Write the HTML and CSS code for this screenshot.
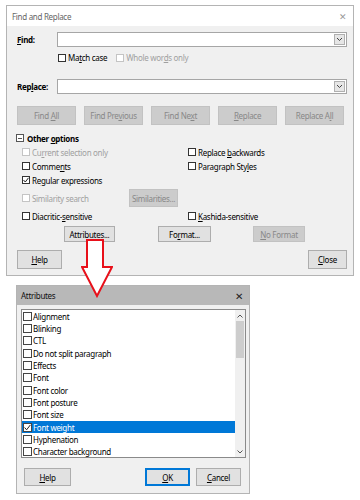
FILE: index.html
```html
<!DOCTYPE html>
<html lang="en">
<head>
<meta charset="UTF-8">
<meta name="viewport" content="width=device-width, initial-scale=1.0">
<title>Find and Replace</title>
<link rel="stylesheet" href="styles.css">
</head>
<body>

<div class="dialog find-dialog">
    <div class="titlebar">
        <span>Find and Replace</span>
        <span class="close-x">&#x2715;</span>
    </div>
    <div class="content">
        <div class="field-row">
            <span class="field-label"><u>F</u>ind:</span>
            <div class="combo"><span class="drop"><svg width="7" height="5" viewBox="0 0 7 5"><polyline points="1,1 3.5,3.5 6,1" fill="none" stroke="#444" stroke-width="1"/></svg></span></div>
        </div>
        <div class="match-row">
            <span class="opt"><span class="box"></span><span>Ma<u>t</u>ch case</span></span>
            <span class="opt off"><span class="box"></span><span>Whole wor<u>d</u>s only</span></span>
        </div>
        <div class="field-row replace-row">
            <span class="field-label">Rep<u>l</u>ace:</span>
            <div class="combo"><span class="drop"><svg width="7" height="5" viewBox="0 0 7 5"><polyline points="1,1 3.5,3.5 6,1" fill="none" stroke="#444" stroke-width="1"/></svg></span></div>
        </div>
        <div class="action-row">
            <span class="btn off"><span>Find <u>A</u>ll</span></span>
            <span class="btn off"><span>Find Pre<u>v</u>ious</span></span>
            <span class="btn off"><span>Find Ne<u>x</u>t</span></span>
            <span class="btn off"><span><u>R</u>eplace</span></span>
            <span class="btn off"><span>Replace A<u>l</u>l</span></span>
        </div>
        <div class="other-row">
            <span class="minus-box"></span><span>Other <u>o</u>ptions</span>
        </div>
        <div class="options">
            <span class="opt off"><span class="box"></span><span>Cu<u>r</u>rent selection only</span></span>
            <span class="opt"><span class="box"></span><span>Replace <u>b</u>ackwards</span></span>
            <span class="opt"><span class="box"></span><span>Comme<u>n</u>ts</span></span>
            <span class="opt"><span class="box"></span><span>Paragraph Sty<u>l</u>es</span></span>
            <span class="opt"><span class="box"><svg width="6" height="6" viewBox="0 0 6 6"><polyline points="0.5,3 2.3,5 5.5,0.8" fill="none" stroke="#222" stroke-width="1"/></svg></span><span>Re<u>g</u>ular expressions</span></span>
            <span></span>
            <span class="sim-cell">
                <span class="opt off"><span class="box"></span><span>Similarity search</span></span>
                <span class="btn off sim-btn"><span>Similarities...</span></span>
            </span>
            <span></span>
            <span class="opt"><span class="box"></span><span>Diacritic-<u>s</u>ensitive</span></span>
            <span class="opt"><span class="box"></span><span><u>K</u>ashida-sensitive</span></span>
        </div>
        <div class="attr-row">
            <span class="btn attr-btn"><span>Attribu<u>t</u>es...</span></span>
            <span class="btn format-btn"><span>Fo<u>r</u>mat...</span></span>
            <span class="btn off noformat-btn"><span><u>N</u>o Format</span></span>
        </div>
        <div class="footer-row">
            <span class="btn help-btn"><span><u>H</u>elp</span></span>
            <span class="btn close-btn"><span><u>C</u>lose</span></span>
        </div>
    </div>
</div>

<div class="dialog attr-dialog">
    <div class="titlebar grey">
        <span>Attributes</span>
        <span class="close-x dark">&#x2715;</span>
    </div>
    <div class="attr-content">
        <div class="listbox">
            <div class="items">
                <div class="item"><span class="box"></span>Alignment</div>
                <div class="item"><span class="box"></span>Blinking</div>
                <div class="item"><span class="box"></span>CTL</div>
                <div class="item"><span class="box"></span>Do not split paragraph</div>
                <div class="item"><span class="box"></span>Effects</div>
                <div class="item"><span class="box"></span>Font</div>
                <div class="item"><span class="box"></span>Font color</div>
                <div class="item"><span class="box"></span>Font posture</div>
                <div class="item"><span class="box"></span>Font size</div>
                <div class="item selected"><span class="box"><svg width="7" height="7" viewBox="0 0 7 7"><polyline points="0.6,3.5 2.6,5.8 6.4,0.9" fill="none" stroke="#222" stroke-width="1"/></svg></span>Font weight</div>
                <div class="item"><span class="box"></span>Hyphenation</div>
                <div class="item"><span class="box"></span>Character background</div>
            </div>
            <div class="scrollbar">
                <span class="sb-arrow"><svg width="6" height="4" viewBox="0 0 6 4"><polyline points="0.5,3.5 3,1 5.5,3.5" fill="none" stroke="#555" stroke-width="1"/></svg></span>
                <span class="thumb"></span>
                <span class="sb-track"></span>
                <span class="sb-arrow"><svg width="6" height="4" viewBox="0 0 6 4"><polyline points="0.5,0.5 3,3 5.5,0.5" fill="none" stroke="#555" stroke-width="1"/></svg></span>
            </div>
        </div>
        <div class="attr-footer">
            <span class="btn help2-btn"><span><u>H</u>elp</span></span>
            <span class="btn ok-btn"><span><u>O</u>K</span></span>
            <span class="btn cancel-btn"><span><u>C</u>ancel</span></span>
        </div>
    </div>
</div>

<svg class="arrow" width="32" height="59" viewBox="0 0 32 59">
    <polygon points="6,1 22,1 22,28 31,28 16,57 1,28 6,28" fill="#fff" stroke="#e8101a" stroke-width="2" stroke-linejoin="miter"/>
</svg>

</body>
</html>
```

FILE: styles.css
```css
body {
    margin: 0;
    background-color: #fff;
    font-family: "Noto Sans", sans-serif;
    font-size: 8px;
    letter-spacing: -0.3px;
    color: #000;
    position: relative;
}

u {
    text-decoration-thickness: 1px;
    text-underline-offset: 1px;
}

.dialog {
    box-sizing: border-box;
    border: 1px solid #b4b4b4;
    background-color: #f0f0f0;
}

.find-dialog {
    margin: 5px 0 0 6px;
    width: 348px;
}

.titlebar {
    height: 20px;
    background-color: #fff;
    display: flex;
    align-items: center;
    justify-content: space-between;
    padding: 0 6px 0 5px;
    color: #666;
}

.titlebar.grey {
    height: 19px;
    background-color: #b8b8b8;
    color: #111;
    padding: 0 6px 0 4px;
}

.close-x {
    font-size: 9px;
    color: #999;
}

.close-x.dark {
    color: #222;
    font-size: 10px;
}

.content {
    padding: 6px 6px 6px 10px;
}

.field-row {
    display: flex;
    align-items: center;
    height: 15px;
}

.replace-row {
    margin-top: 17px;
}

.field-label {
    width: 40px;
    font-weight: bold;
}

.combo {
    flex: 1;
    box-sizing: border-box;
    height: 15px;
    border: 1px solid #a6a6a6;
    background-color: #fff;
    display: flex;
    justify-content: flex-end;
    padding: 1px;
}

.drop {
    box-sizing: border-box;
    width: 11px;
    border: 1px solid #b0b0b0;
    background-color: #e6e6e6;
    display: flex;
    align-items: center;
    justify-content: center;
}

.match-row {
    display: flex;
    align-items: center;
    height: 9px;
    margin: 6px 0 0 41px;
    gap: 9px;
}

.opt {
    display: flex;
    align-items: center;
    white-space: nowrap;
}

.opt.off {
    color: #a0a0a0;
}

.box {
    box-sizing: border-box;
    width: 8px;
    height: 8px;
    border: 1px solid #333;
    background-color: #fff;
    margin-right: 2px;
    display: flex;
    align-items: center;
    justify-content: center;
    flex-shrink: 0;
}

.off .box {
    border-color: #c4c4c4;
}

.btn {
    box-sizing: border-box;
    display: flex;
    align-items: center;
    justify-content: center;
    border: 1px solid #adadad;
    background-color: #e1e1e1;
    white-space: nowrap;
}

.btn.off {
    border-color: #c2c2c2;
    background-color: #cccccc;
    color: #888;
}

.action-row {
    display: flex;
    gap: 8px;
    margin-top: 12px;
}

.action-row .btn {
    width: 59px;
    height: 19px;
}

.other-row {
    display: flex;
    align-items: center;
    height: 14px;
    margin: 6px 0 0 -1px;
    font-weight: bold;
}

.minus-box {
    box-sizing: border-box;
    width: 8px;
    height: 8px;
    border: 1px solid #555;
    background: linear-gradient(#555, #555) center / 4px 1px no-repeat, #fff;
    margin-right: 3px;
}

.options {
    display: grid;
    grid-template-columns: 166px 1fr;
    grid-template-rows: 14px 14px 14px 22px 14px;
    align-items: center;
    margin-left: 5px;
}

.sim-cell {
    display: flex;
    align-items: center;
    justify-content: space-between;
    padding-right: 10px;
}

.sim-btn {
    width: 49px;
    height: 18px;
}

.attr-row {
    display: flex;
    margin: 3px 0 0 47px;
}

.attr-row .btn {
    height: 16px;
}

.attr-btn {
    width: 51px;
}

.format-btn {
    width: 53px;
    margin-left: 43px;
}

.noformat-btn {
    width: 52px;
    margin-left: 42px;
}

.footer-row {
    display: flex;
    justify-content: space-between;
    margin-top: 8px;
}

.footer-row .btn {
    height: 19px;
}

.help-btn {
    width: 45px;
}

.close-btn {
    width: 39px;
}

.attr-dialog {
    margin: 9px 0 0 16px;
    width: 234px;
}

.attr-content {
    padding: 4px 3px 7px 3px;
}

.listbox {
    box-sizing: border-box;
    height: 149px;
    border: 1px solid #8a8a8a;
    background-color: #fff;
    display: flex;
    margin-left: 1px;
}

.items {
    flex: 1;
}

.item {
    display: flex;
    align-items: center;
    height: 12.33px;
    padding-left: 1px;
    white-space: nowrap;
}

.item .box {
    width: 9px;
    height: 9px;
    border-color: #444;
    margin-right: 1px;
}

.item.selected {
    background-color: #0078d7;
    color: #fff;
}

.scrollbar {
    width: 10px;
    background-color: #f0f0f0;
    display: flex;
    flex-direction: column;
}

.sb-arrow {
    height: 11px;
    display: flex;
    align-items: center;
    justify-content: center;
}

.thumb {
    height: 37px;
    background-color: #cdcdcd;
    margin: 0 1px;
}

.sb-track {
    flex: 1;
}

.attr-footer {
    display: flex;
    margin-top: 10px;
}

.attr-footer .btn {
    height: 18px;
}

.help2-btn {
    width: 47px;
    margin-left: 4px;
}

.ok-btn {
    width: 45px;
    margin-left: 74px;
    border: 2px solid #0078d7;
}

.cancel-btn {
    width: 45px;
    margin-left: 6px;
}

.arrow {
    position: absolute;
    left: 81px;
    top: 239px;
}
```
